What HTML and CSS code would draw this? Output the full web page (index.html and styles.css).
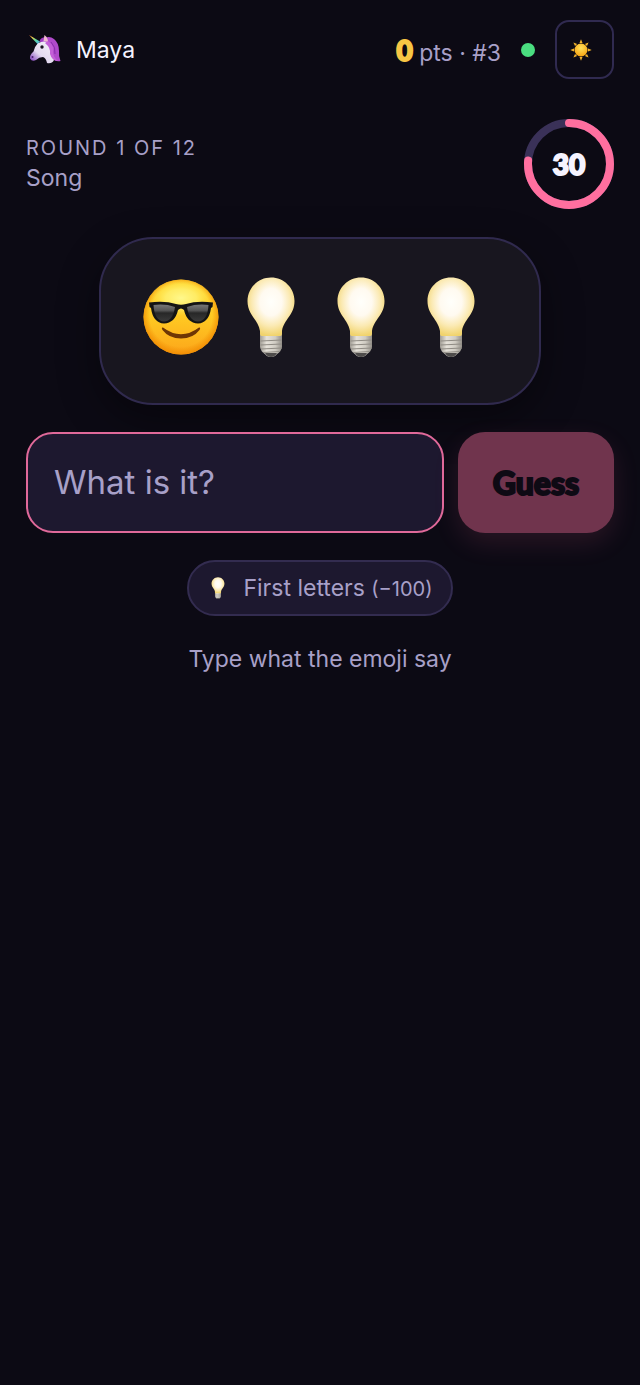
FILE: index.html
```
<!DOCTYPE html>
<html lang="en">
  <head>
    <meta charset="UTF-8" />
    <meta name="viewport" content="width=device-width, initial-scale=1.0" />
    <title>Emoji Guess</title>
    <link rel="stylesheet" href="styles.css">
  </head>
  <body>
    <svg class="sprite" width="0" height="0" aria-hidden="true">
      <defs>
        <linearGradient id="face" x1="0" y1="0" x2="0" y2="1">
          <stop offset="0" stop-color="#ffda38" />
          <stop offset="0.5" stop-color="#ffc922" />
          <stop offset="1" stop-color="#fca51a" />
        </linearGradient>
        <radialGradient id="faceEdge" cx="0.5" cy="0.48" r="0.52">
          <stop offset="0.8" stop-color="#f08a00" stop-opacity="0" />
          <stop offset="1" stop-color="#f08a00" stop-opacity="0.85" />
        </radialGradient>
        <radialGradient id="faceShine" cx="0.5" cy="0.5" r="0.5">
          <stop offset="0" stop-color="#fff88c" />
          <stop offset="0.5" stop-color="#fff272" stop-opacity="0.8" />
          <stop offset="1" stop-color="#ffe94a" stop-opacity="0" />
        </radialGradient>
        <linearGradient id="lens" x1="0" y1="0" x2="0" y2="1">
          <stop offset="0" stop-color="#777" />
          <stop offset="0.35" stop-color="#555" />
          <stop offset="0.5" stop-color="#272727" />
          <stop offset="1" stop-color="#3a3a3a" />
        </linearGradient>
        <radialGradient id="glass" cx="0.5" cy="0.42" r="0.58">
          <stop offset="0" stop-color="#fffffb" />
          <stop offset="0.4" stop-color="#fffaf0" />
          <stop offset="0.7" stop-color="#fbeab4" />
          <stop offset="1" stop-color="#f1d36c" />
        </radialGradient>
        <linearGradient id="metal" x1="0" y1="0" x2="1" y2="0">
          <stop offset="0" stop-color="#a19d95" />
          <stop offset="0.3" stop-color="#e6e2da" />
          <stop offset="0.7" stop-color="#cfcbc2" />
          <stop offset="1" stop-color="#928e87" />
        </linearGradient>
        <radialGradient id="sunDisc" cx="0.5" cy="0.35" r="0.65">
          <stop offset="0" stop-color="#ffe25a" />
          <stop offset="1" stop-color="#f8a412" />
        </radialGradient>
        <linearGradient id="horn" x1="0" y1="0" x2="1" y2="1">
          <stop offset="0" stop-color="#f4663a" />
          <stop offset="0.3" stop-color="#f4dc4e" />
          <stop offset="0.6" stop-color="#58d8a0" />
          <stop offset="1" stop-color="#58a8f4" />
        </linearGradient>
        <linearGradient id="muzzle" x1="0" y1="1" x2="1" y2="0">
          <stop offset="0.1" stop-color="#8a4fc0" />
          <stop offset="0.4" stop-color="#e3daf0" />
          <stop offset="1" stop-color="#f6f3f8" />
        </linearGradient>
      </defs>

      <symbol id="cool" viewBox="0 0 80 80">
        <circle cx="40" cy="40" r="37.5" fill="url(#face)" />
        <circle cx="40" cy="40" r="37.5" fill="url(#faceEdge)" />
        <ellipse cx="40" cy="21" rx="31" ry="18" fill="url(#faceShine)" />
        <path d="M22 50.500 Q40 64 58 50.500 Q60 50 58.500 53 Q52 61.500 40 61.500 Q28 61.500 21.500 53 Q20 50 22 50.500Z" fill="#6e3605" />
        <path d="M8 25.500 Q24 23.500 35 27 Q40 28.500 45 27 Q56 23.500 72 25.500 L71.500 30 L70 31 Q68 46 57 46.500 Q46 46 43 33 Q40 30 37 33 Q34 46 23 46.500 Q12 46 10 31 L8.500 30Z" fill="#141414" />
        <path d="M12.500 28 Q24 26.500 34 30 Q32 44 23 44.500 Q13.500 44 12.500 28Z" fill="url(#lens)" />
        <path d="M67.500 28 Q56 26.500 46 30 Q48 44 57 44.500 Q66.500 44 67.500 28Z" fill="url(#lens)" />
      </symbol>

      <symbol id="bulb" viewBox="0 0 80 80">
        <path d="M29 56 H51 V70 Q50 75 46 77 Q44 80 40 80 Q36 80 34 77 Q30 75 29 70Z" fill="url(#metal)" />
        <path d="M29.500 64 L51 63 M29.500 68 L51 67 M30 72 L51 71 M32 75.500 L49 74.500" stroke="#8f8b84" stroke-width="1" />
        <path d="M34 76 H46 Q44 80 40 80 Q36 80 34 76Z" fill="#4e4c4b" />
        <path d="M40 .5 C53 .5 63.500 11 63.500 24 C63.500 38 53 42 51 54 V57 Q51 59 49 59 H31 Q29 59 29 57 V54 C27 42 16.500 38 16.500 24 C16.500 11 27 .5 40 .5Z" fill="url(#glass)" />
      </symbol>

      <symbol id="sun" viewBox="0 0 22 22">
        <g fill="#f2b32c">
          <path id="ray" d="M11 .3 L12.500 4 H9.500Z" />
          <use href="#ray" transform="rotate(45 11 11)" />
          <use href="#ray" transform="rotate(90 11 11)" />
          <use href="#ray" transform="rotate(135 11 11)" />
          <use href="#ray" transform="rotate(180 11 11)" />
          <use href="#ray" transform="rotate(225 11 11)" />
          <use href="#ray" transform="rotate(270 11 11)" />
          <use href="#ray" transform="rotate(315 11 11)" />
        </g>
        <circle cx="11" cy="11" r="6.500" fill="url(#sunDisc)" />
      </symbol>

      <symbol id="unicorn" viewBox="0 0 32 32">
        <path d="M14 5 Q20 1 25 5 Q30 9 30 17 Q29.500 22 31.500 27 Q26 28 23 24 L14 10Z" fill="#b04acb" />
        <path d="M10.500 7.500 Q12 2.500 18 3.500 L17 10Z" fill="#a23cc4" />
        <path d="M14.500 7 L15.500 1 Q19 3.500 19 8Z" fill="#f0b9cf" />
        <path d="M9 9 Q17 5 21 11 Q22 19 25 26 Q23 30 18 29 Q17 24 14 23 Q10 23 7 26 Q3 28 1 24.500 Q.500 21 4.500 17.500 Q6 12 9 9Z" fill="url(#muzzle)" />
        <path d="M19 7 Q26 12 24 18 Q24 23 29 27 Q23 27 21 20 Q22 14 16 9Z" fill="#c45fd8" />
        <path d="M22 8 Q27 13 26 20" stroke="#8a2cae" stroke-width="1" fill="none" />
        <path d="M0 1 L11 7.500 L8.500 10Z" fill="url(#horn)" />
        <circle cx="13" cy="13" r="1.700" fill="#1c1422" />
        <circle cx="3.500" cy="23" r="1" fill="#4b226e" />
      </symbol>
    </svg>

    <header class="topbar">
      <div class="player">
        <svg class="avatar" role="img" aria-label="Unicorn"><use href="#unicorn" /></svg>
        <span class="name">Maya</span>
      </div>
      <div class="stats">
        <p class="score"><strong>0</strong> pts · #3</p>
        <span class="online"></span>
        <button class="theme" type="button" aria-label="Light theme">
          <svg class="sun"><use href="#sun" /></svg>
        </button>
      </div>
    </header>

    <main>
      <section class="round">
        <div class="round_info">
          <p class="round_count">Round 1 of 12</p>
          <p class="category">Song</p>
        </div>
        <div class="timer">
          <svg class="timer_ring" viewBox="0 0 90 90" aria-hidden="true">
            <circle class="timer_track" cx="45" cy="45" r="41" />
            <circle class="timer_left" cx="45" cy="45" r="41" pathLength="100" stroke-dasharray="76.4 100" transform="rotate(-90 45 45)" />
          </svg>
          <span class="timer_text">30</span>
        </div>
      </section>

      <div class="puzzle">
        <svg class="emoji"><use href="#cool" /></svg>
        <svg class="emoji"><use href="#bulb" /></svg>
        <svg class="emoji"><use href="#bulb" /></svg>
        <svg class="emoji"><use href="#bulb" /></svg>
      </div>

      <form class="guess">
        <input class="guess_input" type="text" placeholder="What is it?" aria-label="Your guess" autocomplete="off" />
        <button class="guess_button" type="submit" disabled>Guess</button>
      </form>

      <button class="hint" type="button">
        <svg class="hint_icon"><use href="#bulb" /></svg>
        <span>First letters <small>(−100)</small></span>
      </button>

      <p class="help">Type what the emoji say</p>
    </main>
  </body>
</html>
```

FILE: styles.css
```
* {
  box-sizing: border-box;
}

body {
  margin: 0;
  padding: 20px 26px;
  min-height: 100vh;
  background: #0c0a14;
  color: #f5f3ff;
  font-family: Inter, "Liberation Sans", sans-serif;
  font-size: 23px;
  line-height: 30px;
}

p {
  margin: 0;
}

button,
input {
  font-family: inherit;
}

.sprite {
  position: absolute;
}

.topbar,
.player,
.stats,
.round {
  display: flex;
  align-items: center;
}

.topbar,
.round {
  justify-content: space-between;
}

.player {
  gap: 15px;
  padding-left: 3px;
}

.avatar {
  width: 32px;
  height: 32px;
}

.stats {
  gap: 20px;
}

.score {
  padding-top: 4px;
  color: #a8a0c8;
}

.score strong,
.timer_text,
.guess_button {
  font-family: Lato, "Open Sans", sans-serif;
  font-weight: 900;
  -webkit-text-stroke: 2px currentColor;
}

.score strong {
  color: #f8c644;
  font-size: 28px;
}

.online {
  width: 14px;
  height: 14px;
  border-radius: 50%;
  background: #4ade80;
}

.theme {
  display: flex;
  align-items: center;
  width: 59px;
  height: 59px;
  padding: 0 13px;
  border: 2px solid #302a50;
  border-radius: 14px;
  background: none;
}

.sun {
  width: 22px;
  height: 22px;
}

main {
  display: flex;
  flex-direction: column;
  align-items: center;
  padding-top: 40px;
}

.round {
  width: 100%;
  color: #a8a0c8;
}

.round_info {
  padding-bottom: 3px;
}

.round_count {
  font-size: 20px;
  letter-spacing: 2px;
  text-transform: uppercase;
}

.timer {
  display: grid;
  place-items: center;
  width: 90px;
  height: 90px;
}

.timer_ring,
.timer_text {
  grid-area: 1 / 1;
}

.timer_ring {
  width: 90px;
  height: 90px;
}

.timer_ring circle {
  fill: none;
  stroke-width: 8;
}

.timer_track {
  stroke: #3a3158;
}

.timer_left {
  stroke: #ff6f9f;
  stroke-linecap: round;
}

.timer_text {
  color: #f5f3ff;
  font-size: 28px;
}

.puzzle {
  display: flex;
  gap: 8px;
  margin-top: 28px;
  padding: 38px 47px 46px 39px;
  border: 2px solid #302a4e;
  border-radius: 54px;
  background: #18161f;
  box-shadow: 0 14px 40px rgba(0, 0, 0, 0.4);
}

.emoji {
  width: 82px;
  height: 80px;
}

.guess {
  display: flex;
  gap: 14px;
  width: 100%;
  margin-top: 27px;
}

.guess_input {
  flex: 1;
  min-width: 0;
  height: 101px;
  padding: 0 26px 2px;
  border: 2px solid #e0699a;
  border-radius: 27px;
  outline: none;
  background: #1d182f;
  color: #f5f3ff;
  font-size: 33px;
}

.guess_input::placeholder {
  color: #a8a0c8;
  opacity: 1;
}

.guess_button {
  width: 156px;
  border: 0;
  border-radius: 27px;
  background: #70344d;
  box-shadow: 0 10px 27px rgba(255, 111, 159, 0.12);
  color: #0e0a14;
  font-size: 32px;
}

.hint {
  display: flex;
  align-items: center;
  gap: 14px;
  height: 56px;
  margin-top: 27px;
  padding: 0 18px;
  border: 2px solid #332c50;
  border-radius: 28px;
  background: #1d182f;
  color: #a8a0c8;
  font-size: 23px;
}

.hint_icon {
  width: 22px;
  height: 22px;
}

.hint small {
  font-size: 20px;
}

.help {
  margin-top: 28px;
  color: #a8a0c8;
}
```
